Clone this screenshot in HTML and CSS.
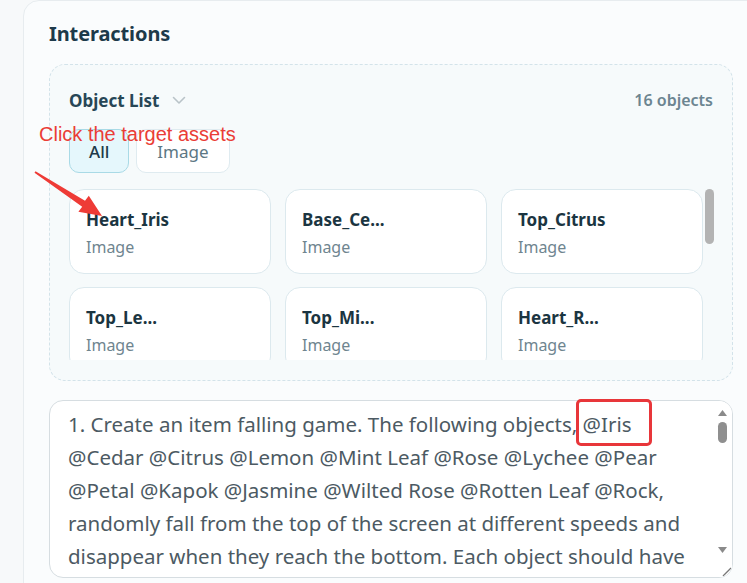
FILE: index.html
```html
<!DOCTYPE html>
<html>
<head>
<meta charset="utf-8">
<link rel="stylesheet" href="styles.css">
</head>
<body>
<div class="panel">
  <h2 class="title">Interactions</h2>
  <div class="objlist">
    <div class="ol-head">
      <div class="ol-name">Object List
        <svg class="chev" width="14" height="9" viewBox="0 0 14 9"><path d="M1.5 1.5 L7 7 L12.5 1.5" fill="none" stroke="#b9c3c8" stroke-width="1.6" stroke-linecap="round" stroke-linejoin="round"/></svg>
      </div>
      <div class="ol-count">16 objects</div>
    </div>
    <div class="tabs">
      <div class="tab active">All</div>
      <div class="tab">Image</div>
    </div>
    <div class="list">
      <div class="grid">
        <div class="card"><div class="c-name">Heart_Iris</div><div class="c-type">Image</div></div>
        <div class="card"><div class="c-name">Base_Ce...</div><div class="c-type">Image</div></div>
        <div class="card"><div class="c-name">Top_Citrus</div><div class="c-type">Image</div></div>
        <div class="card"><div class="c-name">Top_Le...</div><div class="c-type">Image</div></div>
        <div class="card"><div class="c-name">Top_Mi...</div><div class="c-type">Image</div></div>
        <div class="card"><div class="c-name">Heart_R...</div><div class="c-type">Image</div></div>
      </div>
      <div class="l-scroll"><div class="l-thumb"></div></div>
    </div>
  </div>
  <div class="prompt">
    <div class="p-text">
      <span class="ln">1. Create an item falling game. The following objects, @Iris</span>
      <span class="ln">@Cedar @Citrus @Lemon @Mint Leaf @Rose @Lychee @Pear</span>
      <span class="ln">@Petal @Kapok @Jasmine @Wilted Rose @Rotten Leaf @Rock,</span>
      <span class="ln">randomly fall from the top of the screen at different speeds and</span>
      <span class="ln">disappear when they reach the bottom. Each object should have</span>
    </div>
    <div class="p-scroll">
      <svg class="arr" width="9" height="6" viewBox="0 0 9 6"><path d="M0 6 L4.5 0 L9 6 Z" fill="#8a8a8a"/></svg>
      <div class="thumb"></div>
      <div class="track"></div>
      <svg class="arr" width="9" height="6" viewBox="0 0 9 6"><path d="M0 0 L4.5 6 L9 0 Z" fill="#8a8a8a"/></svg>
      <div class="resize">
        <svg width="12" height="12" viewBox="0 0 12 12"><path d="M11 3 L3 11 M11 7 L7 11" stroke="#777" stroke-width="1.3"/></svg>
      </div>
    </div>
  </div>
</div>
<div class="note">Click the target assets</div>
<svg class="arrow" width="747" height="583" viewBox="0 0 747 583"><polygon points="35.5,171.2 85,200.8 88.8,195.8 102,216 78.4,211.8 82.2,206.8 34.5,172.8" fill="#ee3b36"/></svg>
<div class="hl"></div>
</body>
</html>
```
FILE: styles.css
```css
* { box-sizing: border-box; }
html, body { margin: 0; padding: 0; }
body {
  width: 747px;
  height: 583px;
  overflow: hidden;
  background: #f7f9fa;
  font-family: "Noto Sans", "Open Sans", sans-serif;
  position: relative;
}
.panel {
  margin-left: 23px;
  width: 760px;
  height: 600px;
  background: #fafcfd;
  border: 1px solid #e7ecef;
  border-radius: 16px;
  padding: 18px 0 0 25px;
}
.title {
  margin: 0;
  font-size: 20px;
  line-height: 30px;
  font-weight: 700;
  color: #1d3a4a;
  letter-spacing: -0.1px;
}
.objlist {
  margin-top: 15px;
  width: 684px;
  height: 317px;
  border: 1px dashed #d3e3ea;
  border-radius: 16px;
  background: #f6fafb;
  padding: 22px 19px 0 19px;
}
.ol-head {
  display: flex;
  justify-content: space-between;
  align-items: center;
  height: 26px;
}
.ol-name {
  font-size: 17px;
  font-weight: 700;
  color: #274656;
  display: flex;
  align-items: center;
  gap: 13px;
}
.chev { margin-top: 1px; }
.ol-count {
  font-size: 16px;
  font-weight: 600;
  color: #6c8591;
}
.tabs {
  display: flex;
  gap: 7px;
  margin-top: 16px;
}
.tab {
  height: 44px;
  padding: 0 20px;
  display: flex;
  align-items: center;
  border: 1px solid #dfebf0;
  border-radius: 10px;
  background: #ffffff;
  font-size: 17px;
  color: #5c7784;
}
.tab.active {
  background: #e5f7fc;
  border-color: #a9dae6;
  color: #1d3a4a;
  font-weight: 500;
  padding: 0 19px;
}
.list {
  margin-top: 16px;
  display: flex;
  height: 171px;
  width: 645px;
}
.grid {
  width: 635px;
  height: 171px;
  overflow: hidden;
  display: grid;
  grid-template-columns: repeat(3, 202px);
  grid-auto-rows: 85px;
  column-gap: 14px;
  row-gap: 13px;
  align-content: start;
}
.l-scroll {
  width: 10px;
  padding-left: 1px;
}
.l-thumb {
  width: 9px;
  height: 55px;
  background: #b3b3b3;
  border-radius: 5px;
}
.card {
  background: #ffffff;
  border: 1px solid #dce9ee;
  border-radius: 15px;
  padding: 17px 16px 0 16px;
}
.c-name {
  font-size: 17px;
  font-weight: 700;
  color: #1b3541;
  line-height: 26px;
}
.c-type {
  font-size: 16px;
  color: #6f858f;
  line-height: 24px;
  margin-top: 2px;
}
.prompt {
  margin-top: 19px;
  width: 684px;
  height: 178px;
  border: 1px solid #d6dde1;
  border-radius: 14px;
  background: #ffffff;
  display: flex;
  overflow: hidden;
}
.p-text {
  flex: 1;
  padding: 7px 0 0 18px;
  overflow: hidden;
  font-size: 20.5px;
  line-height: 33px;
  color: #4c5a63;
}
.ln { display: block; white-space: nowrap; }
.p-scroll {
  width: 19px;
  display: flex;
  flex-direction: column;
  align-items: center;
  padding-top: 9px;
  background: #ffffff;
}
.arr { flex: none; }
.thumb {
  margin-top: 6px;
  width: 9px;
  height: 21px;
  border-radius: 5px;
  background: #8f8f8f;
}
.track { flex: 1; }
.resize {
  margin-top: 7px;
  width: 19px;
  height: 17px;
  display: flex;
  align-items: flex-end;
  justify-content: flex-end;
  background: #ffffff;
}
.note {
  position: absolute;
  left: 39px;
  top: 123px;
  font-family: "Liberation Sans", Arial, sans-serif;
  font-size: 20px;
  color: #ea3d36;
  white-space: nowrap;
}
.arrow { position: absolute; left: 0; top: 0; pointer-events: none; }
.hl {
  position: absolute;
  left: 576px;
  top: 399px;
  width: 76px;
  height: 47px;
  border: 3px solid #e8363a;
  border-radius: 5px;
}
```
